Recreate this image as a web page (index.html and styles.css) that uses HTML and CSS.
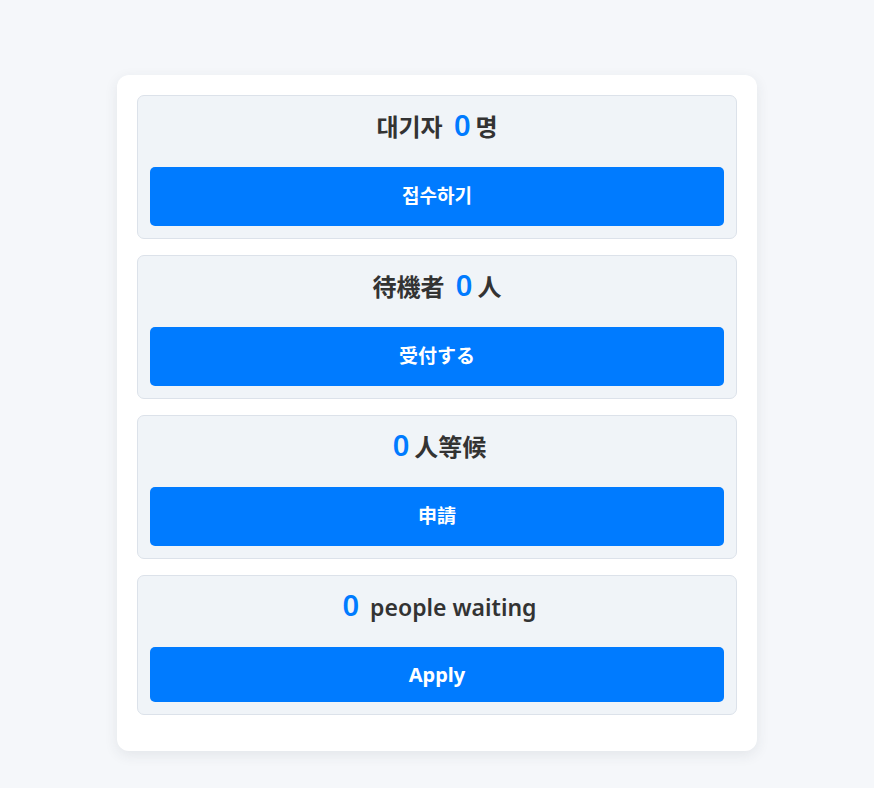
FILE: index.html
```html
<!DOCTYPE html>
<html lang="ko">
<head>
<meta charset="utf-8">
<title>Queue</title>
<link rel="stylesheet" href="styles.css">
</head>
<body>
  <main class="panel">
    <section class="queue queue-ko" lang="ko">
      <h2 class="queue-title">대기자 <span class="count">0</span>명</h2>
      <button class="apply-btn" type="button">접수하기</button>
    </section>
    <section class="queue queue-ja" lang="ja">
      <h2 class="queue-title">待機者 <span class="count">0</span>人</h2>
      <button class="apply-btn" type="button">受付する</button>
    </section>
    <section class="queue queue-zh" lang="zh-Hant">
      <h2 class="queue-title"><span class="count">0</span>人等候</h2>
      <button class="apply-btn" type="button">申請</button>
    </section>
    <section class="queue queue-en" lang="en">
      <h2 class="queue-title"><span class="count">0</span> people waiting</h2>
      <button class="apply-btn" type="button">Apply</button>
    </section>
  </main>
</body>
</html>
```

FILE: styles.css
```css
html, body {
  margin: 0;
  padding: 0;
}

body {
  background: #f5f7fa;
  font-family: "Noto Sans", "Noto Sans CJK KR", sans-serif;
  color: #333333;
  padding: 75px 0 37px;
}

.panel {
  width: 640px;
  margin: 0 auto;
  box-sizing: border-box;
  padding: 20px;
  background: #ffffff;
  border-radius: 12px;
  box-shadow: 0 4px 14px rgba(40, 50, 70, 0.09);
}

.queue {
  background: #f0f4f8;
  border: 1px solid #dce2ea;
  border-radius: 7px;
  padding: 12px;
  margin-bottom: 16px;
  text-align: center;
}

.queue-ko { font-family: "Noto Sans", "Noto Sans CJK KR", sans-serif; }
.queue-ja { font-family: "Noto Sans", "Noto Sans CJK JP", sans-serif; }
.queue-zh { font-family: "Noto Sans", "Noto Sans CJK TC", sans-serif; }
.queue-en { font-family: "Noto Sans", sans-serif; }

.queue-title {
  margin: 0 0 21px;
  font-size: 24px;
  line-height: 38px;
  font-weight: 700;
  color: #333333;
}

.queue-en .queue-title {
  font-size: 23px;
  font-weight: 600;
}

.count {
  color: #007bff;
  font-size: 29px;
  line-height: 1;
  font-weight: 600;
  margin: 0 5px;
}

.apply-btn {
  display: block;
  width: 100%;
  border: none;
  border-radius: 5px;
  background: #007bff;
  color: #ffffff;
  font-family: inherit;
  font-size: 19px;
  font-weight: 700;
  line-height: 27px;
  padding: 16px 0;
  cursor: pointer;
}

.queue-en .apply-btn {
  line-height: 23px;
  font-size: 20px;
}
```
